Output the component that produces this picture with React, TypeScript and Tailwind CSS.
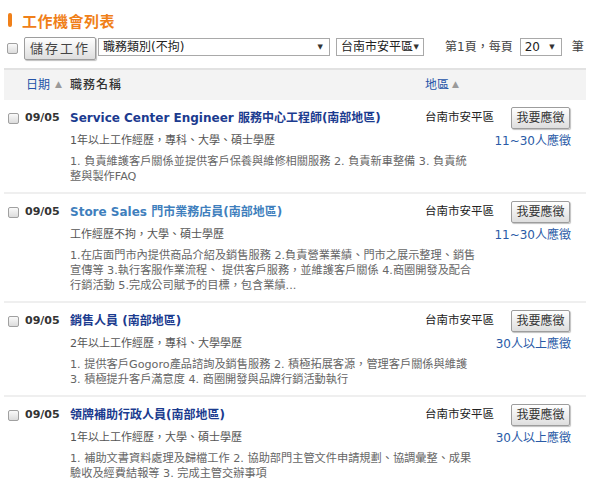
import React from "react";

type Job = {
  title: string;
  visited?: boolean;
  exp: string;
  count: string;
  desc: string[];
};

const jobs: Job[] = [
  {
    title: "Service Center Engineer 服務中心工程師(南部地區)",
    exp: "1年以上工作經歷，專科、大學、碩士學歷",
    count: "11~30人應徵",
    desc: [
      "1. 負責維護客戶關係並提供客戶保養與維修相關服務 2. 負責新車整備 3. 負責統",
      "整與製作FAQ",
    ],
  },
  {
    title: "Store Sales 門市業務店員(南部地區)",
    visited: true,
    exp: "工作經歷不拘，大學、碩士學歷",
    count: "11~30人應徵",
    desc: [
      "1.在店面門市內提供商品介紹及銷售服務 2.負責營業業績、門市之展示整理、銷售",
      "宣傳等 3.執行客服作業流程、 提供客戶服務，並維護客戶關係 4.商圈開發及配合",
      "行銷活動 5.完成公司賦予的目標，包含業績...",
    ],
  },
  {
    title: "銷售人員 (南部地區)",
    exp: "2年以上工作經歷，專科、大學學歷",
    count: "30人以上應徵",
    desc: [
      "1. 提供客戶Gogoro產品諮詢及銷售服務 2. 積極拓展客源，管理客戶關係與維護",
      "3. 積極提升客戶滿意度 4. 商圈開發與品牌行銷活動執行",
    ],
  },
  {
    title: "領牌補助行政人員(南部地區)",
    exp: "1年以上工作經歷，大學、碩士學歷",
    count: "30人以上應徵",
    desc: [
      "1. 補助文書資料處理及歸檔工作 2. 協助部門主管文件申請規劃、協調彙整、成果",
      "驗收及經費結報等 3. 完成主管交辦事項",
    ],
  },
];

function Checkbox() {
  return (
    <div className="w-[11px] h-[11px] rounded-[2px] border border-[#a0a0a0] bg-linear-to-b from-[#fafafa] to-[#dcdcdc]" />
  );
}

function Select({ w, text, arrowPad }: { w: string; text: string; arrowPad?: string }) {
  return (
    <div
      className={`${w} h-[18px] border border-[#a9a9a9] bg-white flex items-center justify-between pl-[4px] pr-[6px] text-[12px] text-[#222] leading-none`}
    >
      <span className="whitespace-nowrap">{text}</span>
      <span className={`text-[7px] text-[#333] ${arrowPad ?? ""}`}>▼</span>
    </div>
  );
}

export default function App() {
  return (
    <div className="w-[590px] h-[479px] overflow-hidden bg-white font-['DejaVu_Sans','Noto_Sans_CJK_TC',sans-serif] text-[#333]">
      {/* Title */}
      <div className="pt-[12px] pl-[8px] flex items-center h-[28px]">
        <div className="w-[4px] h-[14px] rounded-[2px] bg-[#f08019]" />
        <div className="ml-[10px] text-[15px] font-bold text-[#f08019] leading-none tracking-[0.5px] font-['Noto_Sans_CJK_TC',sans-serif]">
          工作機會列表
        </div>
      </div>

      {/* Toolbar */}
      <div className="mt-[9px] h-[23px] flex items-center">
        <div className="ml-[7px]">
          <Checkbox />
        </div>
        <button className="ml-[6px] w-[72px] h-[23px] border border-[#9d9d9d] rounded-[2px] bg-linear-to-b from-[#ffffff] to-[#dedede] shadow-[1px_1px_1px_rgba(0,0,0,0.25)] text-[13px] text-[#444] tracking-[2px] leading-none flex items-center justify-center">
          儲存工作
        </button>
        <div className="ml-[2px] -mt-[3px]">
          <Select w="w-[232px]" text="職務類別(不拘)" />
        </div>
        <div className="ml-[6px] -mt-[3px]">
          <Select w="w-[88px]" text="台南市安平區" arrowPad="-mr-[2px]" />
        </div>
        <div className="ml-[21px] -mt-[3px] text-[12px] text-[#444] whitespace-nowrap">第1頁，每頁</div>
        <div className="ml-[7px] -mt-[3px]">
          <Select w="w-[42px]" text="20" />
        </div>
        <div className="ml-[10px] -mt-[3px] text-[12px] text-[#444]">筆</div>
      </div>

      {/* Header */}
      <div className="mt-[8px] mx-[4px] h-[32px] bg-[#f3f3f3] border-t-2 border-[#e2e2e2] flex items-center text-[12px]">
        <div className="w-[66px] pl-[22px] flex items-center">
          <span className="text-[#2553a8]">日期</span>
          <span className="ml-[5px] text-[9px] text-[#9a9a9a]">▲</span>
        </div>
        <div className="w-[355px] text-[#333] font-medium tracking-[1px]">職務名稱</div>
        <div className="flex items-center">
          <span className="text-[#2553a8]">地區</span>
          <span className="ml-[3px] text-[9px] text-[#9a9a9a]">▲</span>
        </div>
      </div>

      {/* Rows */}
      {jobs.map((job, i) => (
        <div key={i} className="mx-[4px] border-b-2 border-[#efefef] pt-[7px] pb-[8px]">
          <div className="flex items-center h-[22px]">
            <div className="w-[21px] pl-[4px]">
              <Checkbox />
            </div>
            <div className="w-[45px] text-[11px] font-bold text-[#333]">09/05</div>
            <div
              className={`w-[355px] text-[12px] font-bold whitespace-nowrap ${
                job.visited ? "text-[#3f7fbd]" : "text-[#1b3b8f]"
              }`}
            >
              {job.title}
            </div>
            <div className="w-[86px] text-[11.5px] text-[#222] whitespace-nowrap">台南市安平區</div>
            <button className="w-[59px] h-[22px] border border-[#9d9d9d] rounded-[2px] bg-linear-to-b from-[#ffffff] to-[#dedede] shadow-[1px_1px_1px_rgba(0,0,0,0.25)] text-[12px] text-[#333] leading-none flex items-center justify-center">
              我要應徵
            </button>
          </div>
          <div className="mt-[3px] h-[18px] flex items-center">
            <div className="pl-[66px] text-[11px] text-[#555] whitespace-nowrap">{job.exp}</div>
            <div className="ml-auto mr-[15px] text-[12px] text-[#2a5aa6] whitespace-nowrap">{job.count}</div>
          </div>
          <div className="mt-[4px] pl-[66px] text-[11.2px] leading-[15px] text-[#666]">
            {job.desc.map((d, j) => (
              <div key={j} className="whitespace-nowrap">
                {d}
              </div>
            ))}
          </div>
        </div>
      ))}
    </div>
  );
}
